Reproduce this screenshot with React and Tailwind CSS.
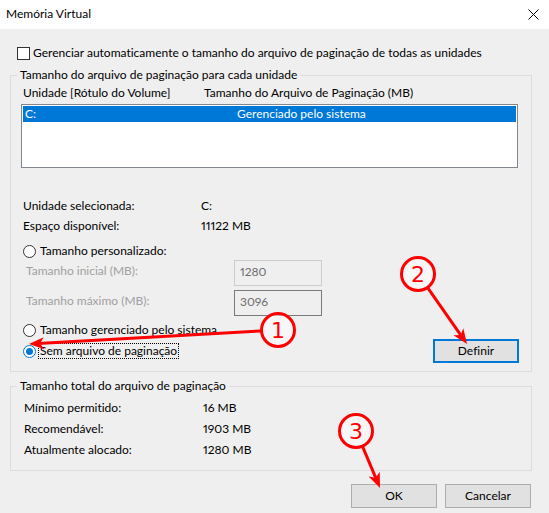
import { useState } from 'react'

const totals = [
  { label: 'Mínimo permitido:', value: '16 MB' },
  { label: 'Recomendável:', value: '1903 MB' },
  { label: 'Atualmente alocado:', value: '1280 MB' },
]

function Radio({ label, value, mode, onChange }) {
  const checked = mode === value
  return (
    <label className="flex h-4 w-fit items-center gap-[2px]">
      <input
        type="radio"
        name="mode"
        value={value}
        checked={checked}
        onChange={() => onChange(value)}
        className="size-[13px] appearance-none rounded-full border border-[#333333] bg-white outline-none checked:border-[#0078d7] checked:bg-[radial-gradient(circle,#0078d7_3px,#ffffff_4px)]"
      />
      <span className={checked ? 'border border-dotted border-black px-px leading-[14px]' : 'border border-transparent px-px leading-[14px]'}>
        {label}
      </span>
    </label>
  )
}

function Group({ title, className, children }) {
  return (
    <fieldset className={`min-w-0 border border-[#dcdcdc] px-[6px] ${className}`}>
      <legend className="px-[3px]">{title}</legend>
      {children}
    </fieldset>
  )
}

function Button({ children, primary }) {
  return (
    <button
      type="button"
      className={
        primary
          ? 'h-6 w-[86px] border-2 border-[#0078d7] bg-[#e1e1e1]'
          : 'h-6 w-[86px] border border-[#adadad] bg-[#e1e1e1]'
      }
    >
      {children}
    </button>
  )
}

// Numbered circle with an arrow; coordinates are local to the control it marks
function Callout({ number, cx, cy, tipX, tipY }) {
  const dx = tipX - cx
  const dy = tipY - cy
  const length = Math.hypot(dx, dy)
  const angle = (Math.atan2(dy, dx) * 180) / Math.PI
  return (
    <svg aria-hidden="true" className="pointer-events-none absolute top-0 left-0 z-10 size-px overflow-visible">
      <g transform={`translate(${cx} ${cy}) rotate(${angle})`} fill="#ff0000">
        <path d={`M17 0H${length - 9}`} stroke="#ff0000" strokeWidth="3" />
        <path d={`M${length} 0l-15 -6l4 6l-4 6z`} />
      </g>
      <circle cx={cx} cy={cy} r="16.5" fill="#ffffff" fillOpacity="0.5" stroke="#ff0000" strokeWidth="3" />
      <text x={cx} y={cy + 8} textAnchor="middle" fill="#ff0000" className="font-['DejaVu_Sans',sans-serif] text-[22px]">
        {number}
      </text>
    </svg>
  )
}

export default function App() {
  const [auto, setAuto] = useState(false)
  const [mode, setMode] = useState('none')

  return (
    <div className="min-h-screen bg-[#efefef] font-['Lato','Open_Sans',sans-serif] text-[12px] leading-4 text-black proportional-nums [font-variant-ligatures:none]">
      <header className="flex h-[29px] items-center justify-between bg-white pr-[10px] pb-px pl-[6px]">
        <h1>Memória Virtual</h1>
        <button type="button" aria-label="Fechar" className="flex size-[11px] items-center justify-center">
          <svg viewBox="0 0 11 11" className="size-[11px]" fill="none" stroke="#000000">
            <path d="M.5 .5l10 10M10.5 .5l-10 10" />
          </svg>
        </button>
      </header>

      <main className="pr-[17px] pl-[10px]">
        <label className="ml-[7px] flex h-[38px] items-center gap-[3px] pt-4 pb-[6px]">
          <input
            type="checkbox"
            checked={auto}
            onChange={(e) => setAuto(e.target.checked)}
            className="size-[13px] shrink-0 appearance-none border border-[#333333] bg-white checked:bg-[#0078d7]"
          />
          <span className="whitespace-nowrap">
            Gerenciar automaticamente o tamanho do arquivo de paginação de todas as unidades
          </span>
        </label>

        <Group title="Tamanho do arquivo de paginação para cada unidade" className="pb-2">
          <div className="pt-[2px] pr-[6px] pl-1">
            <div className="flex pl-[2px]">
              <span className="w-[181px]">Unidade [Rótulo do Volume]</span>
              <span>Tamanho do Arquivo de Paginação (MB)</span>
            </div>
            <ul role="listbox" aria-label="Unidades" className="mt-[3px] mr-px h-16 border border-[#828790] bg-white p-px">
              <li role="option" aria-selected="true" className="flex bg-[#0078d7] pl-[2px] text-white">
                <span className="w-[212px]">C:</span>
                <span>Gerenciado pelo sistema</span>
              </li>
            </ul>

            <div className="pl-[2px]">
              <dl className="mt-[30px] grid grid-cols-[178px_1fr] gap-y-1">
                <dt>Unidade selecionada:</dt>
                <dd>C:</dd>
                <dt>Espaço disponível:</dt>
                <dd>11122 MB</dd>
              </dl>

              <div className="mt-[9px]">
                <Radio label="Tamanho personalizado:" value="custom" mode={mode} onChange={setMode} />
              </div>
              <div className="mt-px grid grid-cols-[208px_88px] gap-y-1 pl-[3px] text-[#a0a0a0]">
                <label htmlFor="initial" className="pt-[3px]">Tamanho inicial (MB):</label>
                <input
                  id="initial"
                  disabled
                  defaultValue="1280"
                  className="h-[26px] w-full border border-[#cccccc] px-[5px] pb-1 text-[#6d6d6d]"
                />
                <label htmlFor="maximum" className="pt-[3px]">Tamanho máximo (MB):</label>
                <input
                  id="maximum"
                  disabled
                  defaultValue="3096"
                  className="h-[26px] w-full border border-[#7a7a7a] px-[5px] pb-1 text-[#6d6d6d]"
                />
              </div>
              <div className="mt-[6px]">
                <Radio label="Tamanho gerenciado pelo sistema" value="system" mode={mode} onChange={setMode} />
              </div>
              <div className="mt-px flex items-center justify-between">
                <div className="relative">
                  <Radio label="Sem arquivo de paginação" value="none" mode={mode} onChange={setMode} />
                  <Callout number={1} cx={255} cy={-13} tipX={6} tipY={1} />
                </div>
                <div className="relative">
                  <Button primary>Definir</Button>
                  <Callout number={2} cx={-15} cy={-65} tipX={34} tipY={5} />
                </div>
              </div>
            </div>
          </div>
        </Group>

        <Group title="Tamanho total do arquivo de paginação" className="mt-[6px] pb-[10px]">
          <dl className="grid grid-cols-[179px_1fr] pt-[3px] pl-[7px] leading-[21px]">
            {totals.map((row) => (
              <div key={row.label} className="contents">
                <dt>{row.label}</dt>
                <dd>{row.value}</dd>
              </div>
            ))}
          </dl>
        </Group>

        <footer className="flex justify-end gap-2 pt-[13px] pr-px">
          <div className="relative">
            <Button>OK</Button>
            <Callout number={3} cx={5} cy={-53} tipX={29} tipY={4} />
          </div>
          <Button>Cancelar</Button>
        </footer>
      </main>
    </div>
  )
}
